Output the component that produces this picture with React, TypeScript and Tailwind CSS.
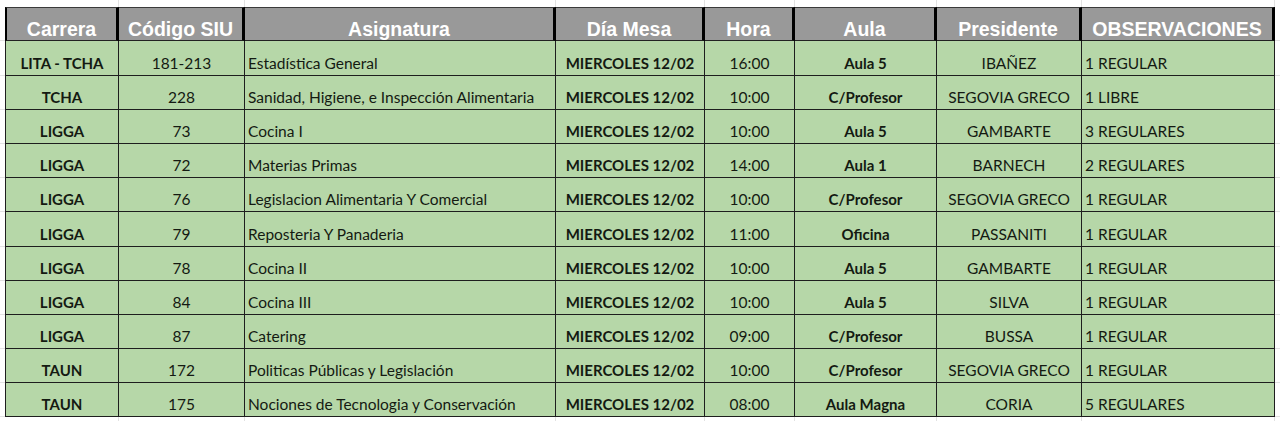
import React from 'react';

const rows: string[][] = [
  ['LITA - TCHA', '181-213', 'Estadística General', '16:00', 'Aula 5', 'IBAÑEZ', '1 REGULAR'],
  ['TCHA', '228', 'Sanidad, Higiene, e Inspección Alimentaria', '10:00', 'C/Profesor', 'SEGOVIA GRECO', '1 LIBRE'],
  ['LIGGA', '73', 'Cocina I', '10:00', 'Aula 5', 'GAMBARTE', '3 REGULARES'],
  ['LIGGA', '72', 'Materias Primas', '14:00', 'Aula 1', 'BARNECH', '2 REGULARES'],
  ['LIGGA', '76', 'Legislacion Alimentaria Y Comercial', '10:00', 'C/Profesor', 'SEGOVIA GRECO', '1 REGULAR'],
  ['LIGGA', '79', 'Reposteria Y Panaderia', '11:00', 'Oficina', 'PASSANITI', '1 REGULAR'],
  ['LIGGA', '78', 'Cocina II', '10:00', 'Aula 5', 'GAMBARTE', '1 REGULAR'],
  ['LIGGA', '84', 'Cocina III', '10:00', 'Aula 5', 'SILVA', '1 REGULAR'],
  ['LIGGA', '87', 'Catering', '09:00', 'C/Profesor', 'BUSSA', '1 REGULAR'],
  ['TAUN', '172', 'Politicas Públicas y Legislación', '10:00', 'C/Profesor', 'SEGOVIA GRECO', '1 REGULAR'],
  ['TAUN', '175', 'Nociones de Tecnologia y Conservación', '08:00', 'Aula Magna', 'CORIA', '5 REGULARES'],
];

const headers = ['Carrera', 'Código SIU', 'Asignatura', 'Día Mesa', 'Hora', 'Aula', 'Presidente', 'OBSERVACIONES'];

const gridCols = 'grid grid-cols-[5px_114px_126px_311px_149px_90px_142px_145px_193px_5px]';

// faint spreadsheet grid around the table
const Strip: React.FC<{ h: string }> = ({ h }) => (
  <div className={`${gridCols} ${h}`}>
    <div />
    <div className="border-r border-[#e2e2e2]" />
    <div className="border-r border-[#e2e2e2]" />
    <div className="border-r border-[#e2e2e2]" />
    <div className="border-r border-[#e2e2e2]" />
    <div className="border-r border-[#e2e2e2]" />
    <div className="border-r border-[#e2e2e2]" />
    <div className="border-r border-[#e2e2e2]" />
    <div className="border-r border-[#e2e2e2]" />
    <div />
  </div>
);

const Cell: React.FC<{ children: React.ReactNode; bold?: boolean; left?: boolean; first?: boolean }> = ({
  children,
  bold,
  left,
  first,
}) => (
  <div
    className={`flex items-end pb-[3px] bg-[#b6d7a8] border-r border-b border-[#1e1e1e] leading-[18px] text-[#141a12] whitespace-nowrap overflow-hidden ${
      left ? 'justify-start pl-[3px]' : 'justify-center'
    } ${bold ? 'font-bold text-[15px]' : 'text-[15.5px]'} ${first ? 'border-l' : ''}`}
  >
    {children}
  </div>
);

export default function App() {
  return (
    <div className="w-[1280px] h-[421px] bg-white overflow-hidden" style={{ fontFamily: 'Lato, "Liberation Sans", sans-serif' }}>
      <Strip h="h-[7px]" />

      <div className={`${gridCols} h-[34px]`}>
        <div className="border-b border-[#e2e2e2]" />
        {headers.map((h, i) => (
          <div
            key={h}
            className={`flex items-end justify-center bg-[#999999] border-t border-b border-t-[#3a3a3a] border-b-[#222] border-r-[3px] border-r-black text-white font-bold text-[19.5px] leading-[22px] whitespace-nowrap ${
              i === 0 ? 'border-l-2 border-l-black' : ''
            }`}
            style={{ fontFamily: '"Liberation Sans", Arial, sans-serif' }}
          >
            {h}
          </div>
        ))}
        <div className="border-b border-[#e2e2e2]" />
      </div>

      {rows.map((r, i) => (
        <div key={i} className={`${gridCols} ${i === 0 || i === 5 ? 'h-[35px]' : 'h-[34px]'}`}>
          <div className="border-b border-[#e2e2e2]" />
          <Cell bold first>{r[0]}</Cell>
          <Cell>{r[1]}</Cell>
          <Cell left>{r[2]}</Cell>
          <Cell bold>MIERCOLES 12/02</Cell>
          <Cell>{r[3]}</Cell>
          <Cell bold>{r[4]}</Cell>
          <Cell>{r[5]}</Cell>
          <Cell left>{r[6]}</Cell>
          <div className="border-b border-[#e2e2e2]" />
        </div>
      ))}

      <Strip h="h-[6px]" />
    </div>
  );
}
